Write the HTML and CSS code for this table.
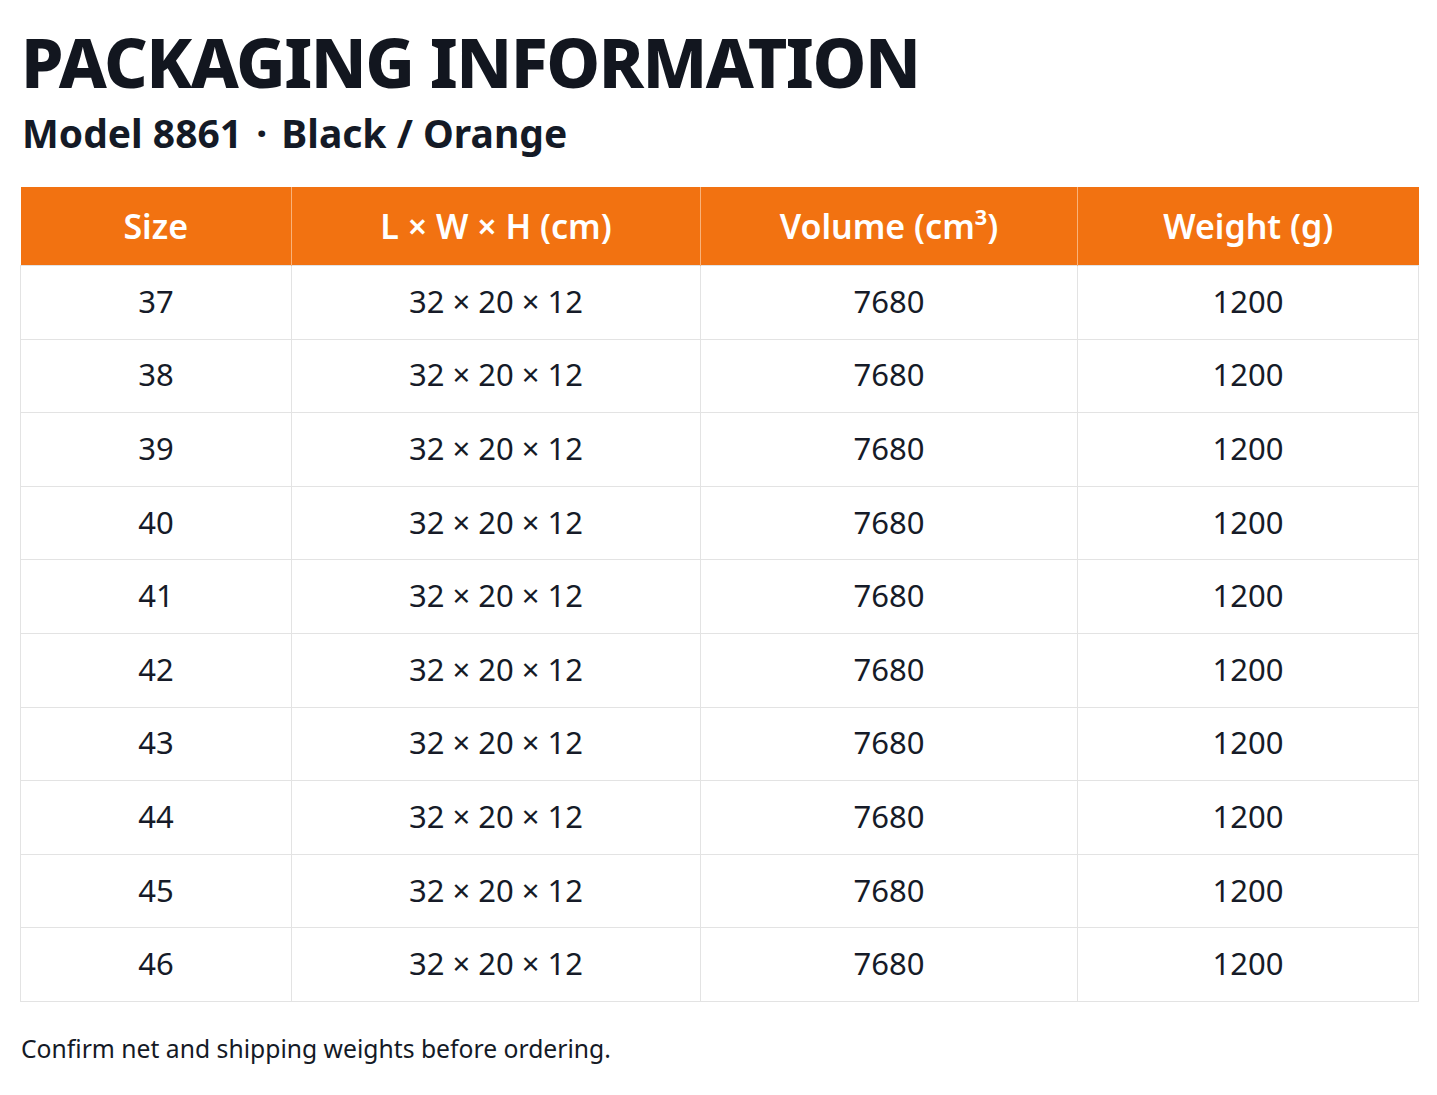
FILE: index.html
```html
<!DOCTYPE html>
<html>
<head>
<meta charset="utf-8">
<link rel="stylesheet" href="styles.css">
</head>
<body>
<div class="page">
  <h1 class="title">PACKAGING INFORMATION</h1>
  <div class="subtitle">Model 8861 <span class="dot">·</span> Black / Orange</div>
  <table class="spec">
    <colgroup>
      <col class="c1"><col class="c2"><col class="c3"><col class="c4">
    </colgroup>
    <thead>
      <tr><th>Size</th><th>L × W × H (cm)</th><th>Volume (cm³)</th><th>Weight (g)</th></tr>
    </thead>
    <tbody>
      <tr><td>37</td><td>32 × 20 × 12</td><td>7680</td><td>1200</td></tr>
      <tr><td>38</td><td>32 × 20 × 12</td><td>7680</td><td>1200</td></tr>
      <tr><td>39</td><td>32 × 20 × 12</td><td>7680</td><td>1200</td></tr>
      <tr><td>40</td><td>32 × 20 × 12</td><td>7680</td><td>1200</td></tr>
      <tr><td>41</td><td>32 × 20 × 12</td><td>7680</td><td>1200</td></tr>
      <tr><td>42</td><td>32 × 20 × 12</td><td>7680</td><td>1200</td></tr>
      <tr><td>43</td><td>32 × 20 × 12</td><td>7680</td><td>1200</td></tr>
      <tr><td>44</td><td>32 × 20 × 12</td><td>7680</td><td>1200</td></tr>
      <tr><td>45</td><td>32 × 20 × 12</td><td>7680</td><td>1200</td></tr>
      <tr><td>46</td><td>32 × 20 × 12</td><td>7680</td><td>1200</td></tr>
    </tbody>
  </table>
  <p class="note">Confirm net and shipping weights before ordering.</p>
</div>
</body>
</html>
```

FILE: styles.css
```css
html, body {
  margin: 0;
  padding: 0;
  background: #ffffff;
}
body {
  font-family: "Noto Sans", "Open Sans", sans-serif;
  color: #141a26;
}
.page {
  padding: 22px 19px 0 20px;
}
.title {
  margin: 0 0 0 1px;
  font-size: 68px;
  line-height: 80px;
  font-weight: 800;
  letter-spacing: -1.5px;
  color: #12161f;
}
.subtitle {
  margin: 6px 0 0 2px;
  font-size: 39px;
  line-height: 50px;
  font-weight: 700;
}
.dot {
  margin: 0 4px;
}
.spec {
  margin-top: 29px;
  width: 1398px;
  border-collapse: collapse;
  table-layout: fixed;
}
.c1 { width: 271px; }
.c2 { width: 409px; }
.c3 { width: 377px; }
.c4 { width: 341px; }
.spec th {
  background: #f27211;
  color: #ffffff;
  font-size: 34px;
  font-weight: 600;
  height: 77px;
  padding: 0 0 1px;
  text-align: center;
  border-left: 1px solid #f9b27a;
}
.spec th:first-child { border-left: none; }
.spec td {
  height: 69.6px;
  padding: 0 0 3px;
  text-align: center;
  font-size: 31px;
  border: 1px solid #e3e3e3;
  color: #161b28;
}
.note {
  margin: 30px 0 0 1px;
  font-size: 24.7px;
  line-height: 34px;
}
```
